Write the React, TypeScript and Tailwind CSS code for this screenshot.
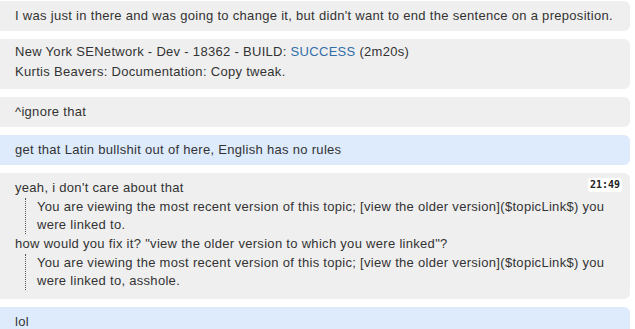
import React from "react";

const font = { fontFamily: '"Liberation Sans", Arial, sans-serif' };

function Bubble({ blue, children, className = "" }: { blue?: boolean; children: React.ReactNode; className?: string }) {
  return (
    <div
      className={`relative mr-[5px] rounded-r-[6px] pl-[15px] pr-2 leading-[18px] ${blue ? "bg-[#ddebfd]" : "bg-[#efefef]"} ${className}`}
    >
      {children}
    </div>
  );
}

function Quote({ children }: { children: React.ReactNode }) {
  return (
    <div className="ml-[10px] my-[1px] border-l border-dotted border-[#555] pl-[11px] pr-4">{children}</div>
  );
}

export default function App() {
  return (
    <div className="w-[635px] h-[329px] overflow-hidden bg-white text-[13px] tracking-[0.3px] text-[#333]" style={font}>
      <div className="flex flex-col gap-[8px] pt-[1px]">
        <Bubble className="h-[30px] py-[6px]">I was just in there and was going to change it, but didn't want to end the sentence on a preposition.</Bubble>
        <Bubble className="h-[50px] leading-[20px] pt-[3px]">
          <div>
            New York SENetwork - Dev - 18362 - BUILD: <span className="text-[#336ea8]">SUCCESS</span> (2m20s)
          </div>
          <div>Kurtis Beavers: Documentation: Copy tweak.</div>
        </Bubble>
        <Bubble className="h-[30px] py-[6px]">^ignore that</Bubble>
        <Bubble blue className="h-[30px] py-[6px]">get that Latin bullshit out of here, English has no rules</Bubble>
        <Bubble className="h-[126px] pt-[6px]">
          <div className="absolute right-[8px] top-[5px] rounded-[2px] bg-white px-[2px] text-[10px] font-bold leading-[14px] tracking-normal text-[#222]" style={{ fontFamily: '"DejaVu Sans Mono", monospace' }}>
            21:49
          </div>
          <div>yeah, i don't care about that</div>
          <Quote>
            You are viewing the most recent version of this topic; [view the older version]($topicLink$) you were linked to.
          </Quote>
          <div>how would you fix it? "view the older version to which you were linked"?</div>
          <Quote>
            You are viewing the most recent version of this topic; [view the older version]($topicLink$) you were linked to, asshole.
          </Quote>
        </Bubble>
        <Bubble blue className="h-[30px] py-[6px]">lol</Bubble>
      </div>
    </div>
  );
}
